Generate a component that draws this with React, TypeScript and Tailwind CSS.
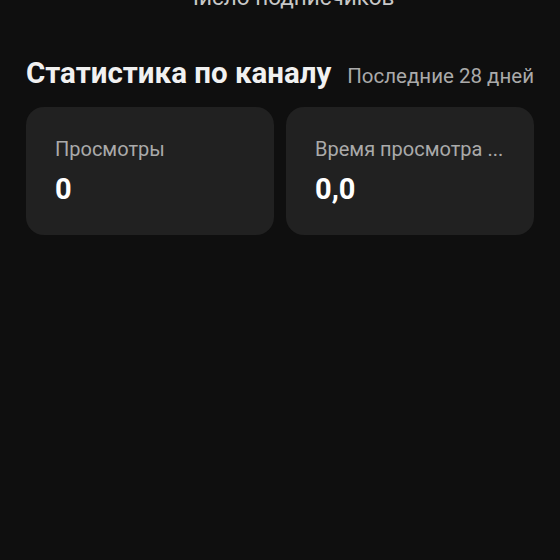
export default function App() {
  const stats = [
    { label: "Просмотры", value: "0" },
    { label: "Время просмотра ...", value: "0,0" },
  ];

  return (
    <div
      className="h-[560px] w-[560px] overflow-hidden bg-[#0f0f0f] text-[#f1f1f1]"
      style={{ fontFamily: "Roboto, 'Noto Sans', sans-serif" }}
    >
      <p className="mt-[-16px] pl-[18px] text-center text-[22.5px] leading-[26px] text-[#c8c8c8]">
        Число подписчиков
      </p>

      <div className="mt-[46px] flex items-baseline justify-between px-[26px]">
        <h2 className="text-[29.5px] font-bold leading-[34px]">Статистика по каналу</h2>
        <span className="text-[20.5px] leading-[24px] text-[#aaaaaa]">Последние 28 дней</span>
      </div>

      <div className="mt-[17px] grid grid-cols-2 gap-3 px-[26px]">
        {stats.map((s) => (
          <div key={s.label} className="rounded-[18px] bg-[#212121] pb-[28px] pl-[29px] pr-6 pt-[30px]">
            <p className="truncate text-[20px] leading-[24px] text-[#aaaaaa]">{s.label}</p>
            <p className="mt-[11px] text-[29px] font-bold leading-[35px] text-white">{s.value}</p>
          </div>
        ))}
      </div>
    </div>
  );
}
